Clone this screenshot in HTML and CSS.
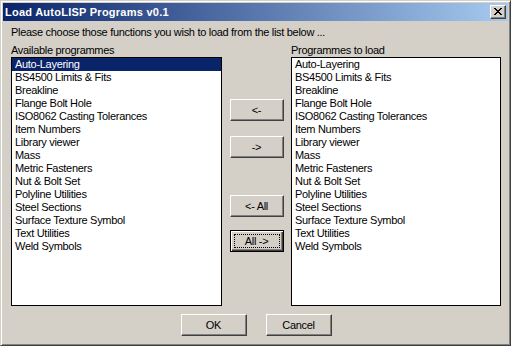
FILE: index.html
```html
<!DOCTYPE html>
<html>
<head>
<meta charset="utf-8">
<title>Load AutoLISP Programs v0.1</title>
<link rel="stylesheet" href="styles.css">
</head>
<body>
<div class="window">
  <div class="titlebar">
    <span class="title">Load AutoLISP Programs v0.1</span>
    <div class="close">
      <svg width="8" height="7" viewBox="0 0 8 7" shape-rendering="crispEdges"><path fill="#000" d="M0 0h2v1H0zM6 0h2v1H6zM1 1h2v1H1zM5 1h2v1H5zM2 2h4v1H2zM3 3h2v1H3zM2 4h4v1H2zM1 5h2v1H1zM5 5h2v1H5zM0 6h2v1H0zM6 6h2v1H6z"/></svg>
    </div>
  </div>
  <div class="content">
    <div class="prompt">Please choose those functions you wish to load from the list below ...</div>
    <div class="columns">
      <div class="col">
        <div class="label">Available programmes</div>
        <ul class="list">
          <li class="sel">Auto-Layering</li>
          <li>BS4500 Limits &amp; Fits</li>
          <li>Breakline</li>
          <li>Flange Bolt Hole</li>
          <li>ISO8062 Casting Tolerances</li>
          <li>Item Numbers</li>
          <li>Library viewer</li>
          <li>Mass</li>
          <li>Metric Fasteners</li>
          <li>Nut &amp; Bolt Set</li>
          <li>Polyline Utilities</li>
          <li>Steel Sections</li>
          <li>Surface Texture Symbol</li>
          <li>Text Utilities</li>
          <li>Weld Symbols</li>
        </ul>
      </div>
      <div class="mid">
        <div class="btn small b1">&lt;-</div>
        <div class="btn small b2">-&gt;</div>
        <div class="btn small b3">&lt;- All</div>
        <div class="btn small b4 default"><span>All -&gt;</span></div>
      </div>
      <div class="col">
        <div class="label">Programmes to load</div>
        <ul class="list">
          <li>Auto-Layering</li>
          <li>BS4500 Limits &amp; Fits</li>
          <li>Breakline</li>
          <li>Flange Bolt Hole</li>
          <li>ISO8062 Casting Tolerances</li>
          <li>Item Numbers</li>
          <li>Library viewer</li>
          <li>Mass</li>
          <li>Metric Fasteners</li>
          <li>Nut &amp; Bolt Set</li>
          <li>Polyline Utilities</li>
          <li>Steel Sections</li>
          <li>Surface Texture Symbol</li>
          <li>Text Utilities</li>
          <li>Weld Symbols</li>
        </ul>
      </div>
    </div>
    <div class="actions">
      <div class="btn wide">OK</div>
      <div class="btn wide">Cancel</div>
    </div>
  </div>
</div>
</body>
</html>
```

FILE: styles.css
```css
html, body {
  margin: 0;
  padding: 0;
  background: #D4D0C8;
}

body {
  font-family: "Liberation Sans", Arial, sans-serif;
  font-size: 11px;
  letter-spacing: -0.3px;
  color: #000;
}

.window {
  width: 511px;
  height: 346px;
  box-sizing: border-box;
  border: 1px solid;
  border-color: #D4D0C8 #404040 #404040 #D4D0C8;
  box-shadow: inset 1px 1px #FFFFFF, inset -1px -1px #808080;
  padding: 2px;
  background: #D4D0C8;
  display: flex;
  flex-direction: column;
}

.titlebar {
  height: 18px;
  display: flex;
  align-items: flex-start;
  background: linear-gradient(to right, #0A246A, #A6CAF0);
  padding: 0 2px;
}

.title {
  color: #fff;
  font-weight: bold;
  font-size: 11px;
  letter-spacing: 0.25px;
  line-height: 13px;
  padding-top: 3px;
  white-space: nowrap;
}

.close {
  margin-left: auto;
  margin-top: 2px;
  width: 16px;
  height: 14px;
  box-sizing: border-box;
  background: #D4D0C8;
  border: 1px solid;
  border-color: #FFFFFF #404040 #404040 #FFFFFF;
  box-shadow: inset -1px -1px #808080;
  display: flex;
  align-items: center;
  justify-content: center;
  padding-right: 1px;
  padding-bottom: 1px;
}

.close svg {
  display: block;
}

.content {
  padding: 5px 7px 0 8px;
}

.prompt {
  height: 13px;
  line-height: 13px;
  white-space: nowrap;
}

.columns {
  margin-top: 5px;
  display: grid;
  grid-template-columns: 211px 69px 210px;
}

.label {
  height: 13px;
  line-height: 13px;
  white-space: nowrap;
}

.list {
  list-style: none;
  margin: 0;
  padding: 0;
  height: 249px;
  box-sizing: border-box;
  border: 1px solid #000;
  background: #fff;
  overflow: hidden;
}

.list li {
  height: 13px;
  line-height: 13px;
  padding-left: 3px;
  white-space: nowrap;
}

.list li.sel {
  background: #0A246A;
  color: #fff;
}

.mid {
  display: flex;
  flex-direction: column;
  align-items: center;
}

.btn {
  box-sizing: border-box;
  height: 22px;
  border: 1px solid;
  border-color: #FFFFFF #404040 #404040 #FFFFFF;
  box-shadow: inset -1px -1px #808080;
  background: #D4D0C8;
  display: flex;
  align-items: center;
  justify-content: center;
  line-height: 13px;
  white-space: nowrap;
}

.btn.small {
  width: 54px;
}

.b1 { margin-top: 55px; }
.b2 { margin-top: 15px; }
.b3 { margin-top: 37px; }
.b4 { margin-top: 13px; }

.btn.default {
  position: relative;
  border-color: #000;
  box-shadow: inset 1px 1px #FFFFFF, inset -1px -1px #404040, inset -2px -2px #808080;
}

.btn.default::after {
  content: "";
  position: absolute;
  left: 3px;
  top: 3px;
  right: 3px;
  bottom: 3px;
  border: 1px dotted #000;
}

.actions {
  margin-top: 8px;
  display: flex;
  justify-content: center;
  gap: 19px;
}

.btn.wide {
  width: 66px;
}
```
